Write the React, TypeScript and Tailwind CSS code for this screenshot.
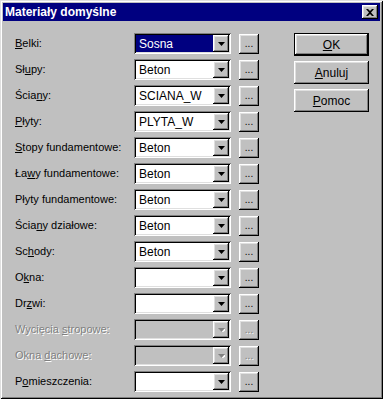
import React from "react";

/* ================= DATA ================= */

interface Row {
  pre: string;
  key?: string;
  post?: string;
  value?: string;
  selected?: boolean;
  disabled?: boolean;
}

const rows: Row[] = [
  { pre: "", key: "B", post: "elki:", value: "Sosna", selected: true },
  { pre: "Sł", key: "u", post: "py:", value: "Beton" },
  { pre: "Ścia", key: "n", post: "y:", value: "SCIANA_W" },
  { pre: "", key: "P", post: "łyty:", value: "PLYTA_W" },
  { pre: "", key: "S", post: "topy fundamentowe:", value: "Beton" },
  { pre: "Ła", key: "w", post: "y fundamentowe:", value: "Beton" },
  { pre: "Płyty fundamentowe:", value: "Beton" },
  { pre: "Ścia", key: "n", post: "y działowe:", value: "Beton" },
  { pre: "Sc", key: "h", post: "ody:", value: "Beton" },
  { pre: "O", key: "k", post: "na:", value: "" },
  { pre: "Dr", key: "z", post: "wi:", value: "" },
  { pre: "Wycięcia ", key: "s", post: "tropowe:", disabled: true },
  { pre: "Okna ", key: "d", post: "achowe:", disabled: true },
  { pre: "P", key: "o", post: "mieszczenia:", value: "" },
];

const raised =
  "shadow-[inset_-1px_-1px_#000,inset_1px_1px_#fff,inset_-2px_-2px_#808080,inset_2px_2px_#dfdfdf]";
const sunken =
  "shadow-[inset_1px_1px_#808080,inset_-1px_-1px_#fff,inset_2px_2px_#000,inset_-2px_-2px_#dfdfdf]";

/* ================= MAIN ================= */

export default function App() {
  return (
    <div
      className={`w-[383px] h-[399px] bg-[#c0c0c0] p-[3px] flex flex-col font-['Liberation_Sans',Arial,sans-serif] text-[11px] text-black shadow-[inset_1px_1px_#dfdfdf,inset_-1px_-1px_#000,inset_2px_2px_#fff,inset_-2px_-2px_#808080]`}
    >
      {/* TITLE BAR */}
      <div className="h-[18px] bg-[#000080] flex items-center justify-between pl-[2px] pr-[2px]">
        <span className="text-white font-bold text-[12px] leading-none">
          Materiały domyślne
        </span>
        <button className={`w-[16px] h-[14px] bg-[#c0c0c0] flex items-center justify-center ${raised}`}>
          <svg width="8" height="7" viewBox="0 0 8 7">
            <path d="M0 0h2l2 2 2-2h2L5 3.5 8 7H6L4 5 2 7H0l3-3.5z" fill="#000" />
          </svg>
        </button>
      </div>

      {/* BODY */}
      <div className="flex pt-[12px] pl-[12px]">
        <div className="flex flex-col gap-[5px]">
          {rows.map((r, i) => (
            <FieldRow key={i} row={r} />
          ))}
        </div>

        <div className="flex flex-col gap-[5px] ml-[35px]">
          <DialogButton isDefault k="O" rest="K" />
          <DialogButton k="A" rest="nuluj" />
          <DialogButton k="P" rest="omoc" />
        </div>
      </div>
    </div>
  );
}

/* ================= PARTS ================= */

function FieldRow({ row }: { row: Row }) {
  const dis = row.disabled;
  return (
    <div className="flex items-center h-[21px]">
      <div
        className={`w-[119px] whitespace-nowrap ${
          dis ? "text-[#808080] [text-shadow:1px_1px_0_#fff]" : ""
        }`}
      >
        {row.pre}
        {row.key && <u>{row.key}</u>}
        {row.post}
      </div>

      {/* COMBO */}
      <div
        className={`w-[97px] h-[21px] p-[2px] flex ${sunken} ${
          dis ? "bg-[#c0c0c0]" : "bg-white"
        }`}
      >
        <div
          className={`flex-1 h-[17px] flex items-center pl-[3px] text-[12px] ${
            row.selected ? "bg-[#000080] text-white" : ""
          }`}
        >
          {row.value}
        </div>
        <div className={`w-[16px] h-[17px] bg-[#c0c0c0] flex items-center justify-center ${raised}`}>
          <svg width="7" height="4" viewBox="0 0 7 4">
            {dis && <path d="M1 1h7L4.5 5z" fill="#fff" />}
            <path d="M0 0h7L3.5 4z" fill={dis ? "#808080" : "#000"} />
          </svg>
        </div>
      </div>

      {/* BROWSE */}
      <button
        className={`ml-[8px] w-[20px] h-[20px] bg-[#c0c0c0] flex items-end justify-center pb-[5px] leading-none text-[10px] ${raised} ${
          dis ? "text-[#808080] [text-shadow:1px_1px_0_#fff]" : ""
        }`}
      >
        ...
      </button>
    </div>
  );
}

function DialogButton({
  k,
  rest,
  isDefault,
}: {
  k: string;
  rest: string;
  isDefault?: boolean;
}) {
  return (
    <button
      className={`w-[75px] h-[23px] bg-[#c0c0c0] flex items-center justify-center text-[12px] ${
        isDefault ? "border border-black" : ""
      }`}
    >
      <span className={`w-full h-full flex items-center justify-center ${raised}`}>
        <u>{k}</u>
        {rest}
      </span>
    </button>
  );
}
